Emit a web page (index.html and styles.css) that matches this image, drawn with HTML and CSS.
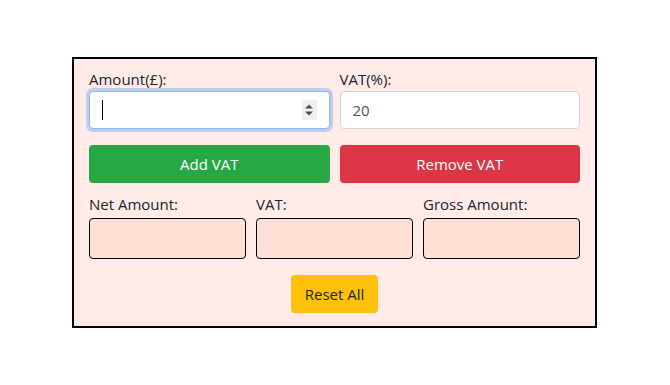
FILE: index.html
```html
<!DOCTYPE html>
<html lang="en">
<head>
<meta charset="utf-8">
<title>VAT Calculator</title>
<link rel="stylesheet" href="styles.css">
</head>
<body>
<main class="calc">
  <div class="row two">
    <div class="field">
      <label class="label" for="amount">Amount(£):</label>
      <div class="input-wrap">
        <input id="amount" class="input focused" type="text" value="">
        <span class="caret"></span>
        <span class="spinner">
          <svg width="10" height="14" viewBox="0 0 10 14"><path d="M1 5.5 L5 1.5 L9 5.5 Z" fill="#505050"/><path d="M1 8.5 L5 12.5 L9 8.5 Z" fill="#505050"/></svg>
        </span>
      </div>
    </div>
    <div class="field">
      <label class="label" for="vat">VAT(%):</label>
      <input id="vat" class="input" type="text" value="20">
    </div>
  </div>
  <div class="row two buttons">
    <button class="btn btn-green">Add VAT</button>
    <button class="btn btn-red">Remove VAT</button>
  </div>
  <div class="row three">
    <div class="field">
      <span class="label">Net Amount:</span>
      <div class="output"></div>
    </div>
    <div class="field">
      <span class="label">VAT:</span>
      <div class="output"></div>
    </div>
    <div class="field">
      <span class="label">Gross Amount:</span>
      <div class="output"></div>
    </div>
  </div>
  <div class="reset-row">
    <button class="btn btn-yellow">Reset All</button>
  </div>
</main>
</body>
</html>
```
FILE: styles.css
```css
* { box-sizing: border-box; }
html, body { margin: 0; padding: 0; }
body {
  background: #ffffff;
  font-family: "Open Sans", "Noto Sans", sans-serif;
  font-size: 15px;
  color: #212529;
  padding: 57px 0 0 72px;
}
.calc {
  width: 525px;
  height: 271px;
  border: 2px solid #000;
  background: #ffece9;
  padding: 8px 15px 12px 15px;
  display: flex;
  flex-direction: column;
}
.row { display: grid; column-gap: 10px; }
.two { grid-template-columns: 1fr 1fr; }
.three { grid-template-columns: 1fr 1fr 1fr; margin-top: 9px; }
.field { display: flex; flex-direction: column; }
.label {
  display: block;
  height: 24px;
  line-height: 24px;
  font-size: 15px;
  color: #212529;
}
.input-wrap { position: relative; }
.input {
  width: 100%;
  height: 38px;
  border: 1px solid #ced4da;
  border-radius: 4px;
  background: #fff;
  padding: 0 12px;
  font-family: inherit;
  font-size: 15px;
  color: #495057;
  outline: none;
}
.input.focused {
  border-color: #86b7fe;
  box-shadow: 0 0 0 3px rgba(13,110,253,0.25);
}
.caret {
  position: absolute;
  left: 13px;
  top: 9px;
  width: 1px;
  height: 20px;
  background: #000;
}
.spinner {
  position: absolute;
  right: 13px;
  top: 9px;
  width: 15px;
  height: 20px;
  background: #f0f0f0;
  display: flex;
  align-items: center;
  justify-content: center;
}
.buttons { margin-top: 16px; }
.btn {
  height: 38px;
  border: none;
  border-radius: 4px;
  font-family: inherit;
  font-size: 15px;
  color: #fff;
  cursor: pointer;
}
.btn-green { background: #28a745; }
.btn-red { background: #dc3545; }
.output {
  height: 41px;
  border: 1px solid #000;
  border-radius: 4px;
  background: #ffe0d4;
  margin-top: 2px;
}
.reset-row {
  display: flex;
  justify-content: center;
  margin-top: 16px;
}
.btn-yellow {
  background: #ffc107;
  color: #212529;
  width: 87px;
}
```
